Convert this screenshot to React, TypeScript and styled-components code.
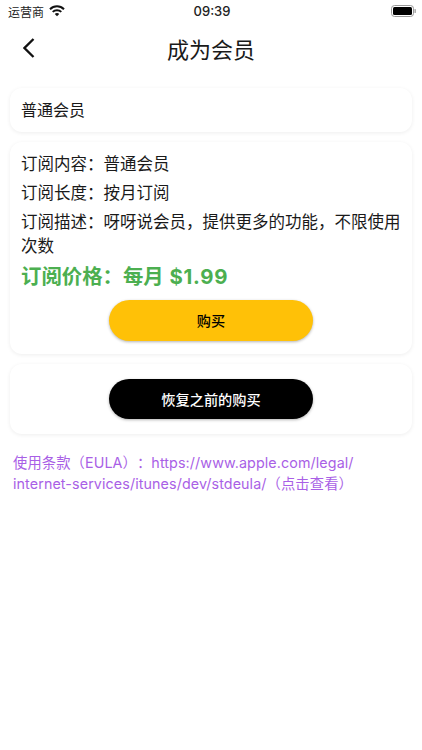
import React from 'react';
import styled, { createGlobalStyle } from 'styled-components';

const GlobalStyle = createGlobalStyle`
  html, body {
    margin: 0;
    padding: 0;
    background: #fff;
    font-family: Inter, "Noto Sans CJK SC", sans-serif;
    color: #1a1a1a;
    text-spacing-trim: space-all;
  }
`;

const Page = styled.div`
  width: 422px;
  height: 750px;
  overflow: hidden;
  display: flex;
  flex-direction: column;
`;

const StatusBar = styled.div`
  height: 22px;
  padding: 0 6px 0 8px;
  display: grid;
  grid-template-columns: 1fr auto 1fr;
  align-items: center;
  font-size: 12px;
  color: #222;
`;

const Carrier = styled.div`
  display: flex;
  align-items: center;
  gap: 5px;
`;

const Clock = styled.div`
  font-size: 13px;
  font-weight: 500;
`;

const Battery = styled.svg`
  justify-self: end;
`;

const NavBar = styled.div`
  height: 52px;
  padding: 0 12px 0 23px;
  display: flex;
  align-items: center;
  position: relative;
  margin-bottom: 14px;
`;

const NavTitle = styled.div`
  position: absolute;
  left: 0;
  right: 0;
  text-align: center;
  font-size: 22px;
`;

const Content = styled.div`
  padding: 0 10px;
  display: flex;
  flex-direction: column;
  gap: 10px;
`;

const Card = styled.div`
  background: #fff;
  border-radius: 12px;
  padding: 11px;
  box-shadow: 0 1px 4px rgba(0, 0, 0, 0.07);
`;

const PlanName = styled.div`
  font-size: 16px;
  line-height: 22px;
`;

const DetailCard = styled(Card)`
  padding: 10px 11px 13px;
`;

const Line = styled.div`
  font-size: 16.500px;
  line-height: 24px;
  margin-bottom: 5px;
`;

const Price = styled.div`
  font-size: 20.400px;
  font-weight: 700;
  line-height: 28px;
  color: #4caf50;
  margin: 3px 0 9px;
`;

const PriceAmount = styled.span`
  letter-spacing: 0.700px;
  margin-left: 1px;
`;

const ActionButton = styled.div<{ $dark?: boolean }>`
  width: 204px;
  height: 40.500px;
  margin: 0 auto;
  border-radius: 21px;
  display: flex;
  align-items: center;
  justify-content: center;
  font-size: 14.200px;
  font-weight: 500;
  background: ${p => (p.$dark ? '#000' : '#ffc107')};
  color: ${p => (p.$dark ? '#fff' : '#000')};
  box-shadow: 0 1px 3px rgba(0, 0, 0, 0.3);
`;

const RestoreCard = styled(Card)`
  padding: 15px 11px 14.500px;
`;

const Terms = styled.div`
  margin: 8.500px 3px 0;
  font-size: 14.300px;
  line-height: 21px;
  letter-spacing: 0.100px;
  color: #a95fe6;
`;

const BackIcon = () => (
  <svg width="12" height="20" viewBox="0 0 12 20" fill="none" stroke="#111" strokeWidth="2.3">
    <path d="M10.500 1 L1.500 10 L10.500 19" />
  </svg>
);

const WifiIcon = () => (
  <svg width="16" height="12" viewBox="0 0 16 12" fill="none" stroke="#111" strokeWidth="2">
    <path d="M1 4.200 A10 10 0 0 1 15 4.200" />
    <path d="M3.700 6.900 A6.200 6.200 0 0 1 12.300 6.900" />
    <path d="M8 8.100c-.9 0-1.700.3-2.200.9L8 11.200 10.200 9c-.5-.6-1.300-.9-2.200-.9z" fill="#111" stroke="none" />
  </svg>
);

export default function App() {
  return (
    <Page>
      <GlobalStyle />
      <StatusBar>
        <Carrier>
          运营商
          <WifiIcon />
        </Carrier>
        <Clock>09:39</Clock>
        <Battery width="25" height="12" viewBox="0 0 25 12">
          <rect x="0.500" y="0.500" width="22" height="11" rx="3" fill="none" stroke="#999" />
          <rect x="2" y="2" width="19" height="8" rx="1.500" fill="#000" />
          <rect x="23.500" y="4" width="1.300" height="4" rx="0.600" fill="#999" />
        </Battery>
      </StatusBar>
      <NavBar>
        <BackIcon />
        <NavTitle>成为会员</NavTitle>
      </NavBar>
      <Content>
        <Card>
          <PlanName>普通会员</PlanName>
        </Card>
        <DetailCard>
          <Line>订阅内容：普通会员</Line>
          <Line>订阅长度：按月订阅</Line>
          <Line>订阅描述：呀呀说会员，提供更多的功能，不限使用次数</Line>
          <Price>
            订阅价格：每月 <PriceAmount>$1.99</PriceAmount>
          </Price>
          <ActionButton>购买</ActionButton>
        </DetailCard>
        <RestoreCard>
          <ActionButton $dark>恢复之前的购买</ActionButton>
        </RestoreCard>
        <Terms>
          使用条款（EULA）：https://www.apple.com/legal/
          <br />
          internet-services/itunes/dev/stdeula/（点击查看）
        </Terms>
      </Content>
    </Page>
  );
}
